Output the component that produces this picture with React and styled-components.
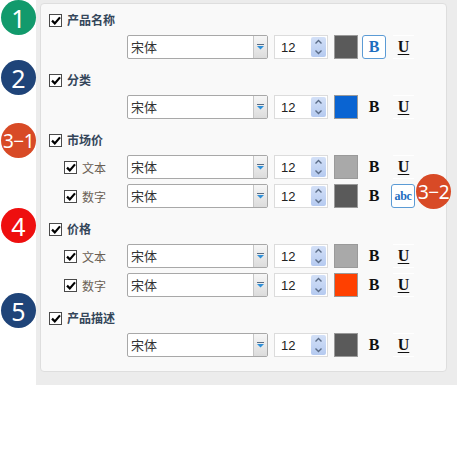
import React from "react";
import styled, { createGlobalStyle, css } from "styled-components";

const Global = createGlobalStyle`
  html, body { margin: 0; padding: 0; background: #fff; }
  body { font-family: "Noto Sans CJK SC", "Noto Sans", sans-serif; }
`;

const Page = styled.div`
  position: relative;
  width: 457px;
  height: 455px;
  padding-left: 36px;
  box-sizing: border-box;
  background: #fff;
`;

const Frame = styled.div`
  background: #ececec;
  height: 385px;
  padding: 3px 10px 13px 4px;
  box-sizing: border-box;
`;

const Panel = styled.div`
  background: #f9f9f9;
  border: 1px solid #dedede;
  border-radius: 4px;
  height: 100%;
  box-sizing: border-box;
  padding: 6px 0 0 8px;
  display: flex;
  flex-direction: column;
  gap: 11px;
`;

const Section = styled.div`
  display: flex;
  flex-direction: column;
  gap: 5px;
`;

const Header = styled.div`
  display: flex;
  align-items: center;
  gap: 5px;
  height: 20px;
`;

const Title = styled.span`
  font-size: 12px;
  font-weight: 700;
  color: #34465a;
  line-height: 20px;
`;

const Row = styled.div`
  display: flex;
  align-items: center;
  height: 24px;
  padding-left: ${(p) => (p.$sub ? "15px" : "78px")};
`;

const LabelCell = styled.div`
  display: flex;
  align-items: center;
  gap: 5px;
  width: 63px;
`;

const SubLabel = styled.span`
  font-size: 12px;
  color: #6a5f55;
`;

const Box = styled.span`
  width: 13px;
  height: 13px;
  box-sizing: border-box;
  border: 1px solid #4a4a4a;
  background: #fff;
  display: inline-flex;
  align-items: center;
  justify-content: center;
  flex: none;
`;

const SelectBox = styled.div`
  width: 141px;
  height: 24px;
  box-sizing: border-box;
  border: 1px solid #a8a8a8;
  border-radius: 2px;
  background: #fff;
  display: flex;
  flex: none;
`;

const SelectText = styled.span`
  flex: 1;
  font-size: 13px;
  color: #333;
  padding-left: 3px;
  line-height: 22px;
`;

const SelectArrow = styled.span`
  width: 13px;
  border-left: 1px solid #c6c6c6;
  background: linear-gradient(#f6f6f6, #dcdcdc);
  display: flex;
  align-items: center;
  justify-content: center;
`;

const NumberBox = styled.div`
  margin-left: 6px;
  width: 54px;
  height: 24px;
  box-sizing: border-box;
  border: 1px solid #dcdcdc;
  background: #fff;
  display: flex;
  align-items: center;
  justify-content: space-between;
  padding: 0 1px 0 6px;
  flex: none;
`;

const NumberText = styled.span`
  font-family: "Liberation Sans", Arial, sans-serif;
  font-size: 13px;
  color: #222;
`;

const Spinner = styled.span`
  width: 15px;
  height: 20px;
  border-radius: 2px;
  background: linear-gradient(#d3e0f7, #b5caf0);
  display: flex;
  flex-direction: column;
  align-items: center;
  justify-content: space-around;
`;

const Swatch = styled.span`
  margin-left: 6px;
  width: 24px;
  height: 24px;
  box-sizing: border-box;
  border: 1px solid #9a9a9a;
  background: ${(p) => p.$color};
  flex: none;
`;

const StyleBtn = styled.span`
  width: 24px;
  height: 24px;
  box-sizing: border-box;
  display: flex;
  align-items: center;
  justify-content: center;
  font-family: "Liberation Serif", "Times New Roman", serif;
  font-weight: 700;
  font-size: 16px;
  color: #111;
  flex: none;
  border: 1px solid transparent;
  border-radius: 3px;
  ${(p) =>
    p.$active &&
    css`
      border-color: #5b9bd5;
      background: #fff;
      color: #1d6dbf;
    `}
`;

const BoldBtn = styled(StyleBtn)`
  margin-left: 4px;
`;

const UBtn = styled(StyleBtn)`
  margin-left: 7px;
  width: 21px;
  border: none;
  border-top: 1px solid #fff;
  border-bottom: 1px solid #fff;
  border-radius: 0;
  text-decoration: underline;
  text-underline-offset: 2px;
`;

const AbcBtn = styled(StyleBtn)`
  margin-left: 5px;
  font-size: 12px;
  letter-spacing: -0.3px;
`;

const Badge = styled.div`
  position: absolute;
  left: ${(p) => p.$x}px;
  top: ${(p) => p.$y}px;
  width: 35px;
  height: 35px;
  border-radius: 50%;
  background: ${(p) => p.$bg};
  color: #fff;
  display: flex;
  align-items: center;
  justify-content: center;
  font-family: "Noto Sans", "Liberation Sans", sans-serif;
  font-size: ${(p) => (p.$small ? "19px" : "25px")};
  letter-spacing: ${(p) => (p.$small ? "-0.5px" : "0")};
`;

const Check = () => (
  <Box>
    <svg width="10" height="9" viewBox="0 0 10 9">
      <path d="M1 4.6 L3.8 7.4 L9 1.4" fill="none" stroke="#000" strokeWidth="2.2" />
    </svg>
  </Box>
);

const Arrow = () => (
  <svg width="7" height="6" viewBox="0 0 7 6">
    <rect x="0" y="0" width="7" height="1" fill="#5a6d84" />
    <path d="M0 2 L7 2 L3.5 5.5 Z" fill="#2f8fd8" />
  </svg>
);

const SpinArrow = ({ up }) => (
  <svg width="9" height="6" viewBox="0 0 9 6">
    <path
      d={up ? "M1.5 4.5 L4.5 1.5 L7.5 4.5" : "M1.5 1.5 L4.5 4.5 L7.5 1.5"}
      fill="none"
      stroke="#5b6d88"
      strokeWidth="1.4"
    />
  </svg>
);

const Controls = ({ color, bold, abc }) => (
  <>
    <SelectBox>
      <SelectText>宋体</SelectText>
      <SelectArrow>
        <Arrow />
      </SelectArrow>
    </SelectBox>
    <NumberBox>
      <NumberText>12</NumberText>
      <Spinner>
        <SpinArrow up />
        <SpinArrow />
      </Spinner>
    </NumberBox>
    <Swatch $color={color} />
    <BoldBtn $active={bold}>B</BoldBtn>
    {abc ? <AbcBtn $active>abc</AbcBtn> : <UBtn>U</UBtn>}
  </>
);

const sections = [
  { title: "产品名称", rows: [{ color: "#5a5a5a", bold: true }] },
  { title: "分类", rows: [{ color: "#0a64d2" }] },
  {
    title: "市场价",
    rows: [
      { label: "文本", color: "#a9a9a9" },
      { label: "数字", color: "#5a5a5a", abc: true },
    ],
  },
  {
    title: "价格",
    rows: [
      { label: "文本", color: "#a9a9a9" },
      { label: "数字", color: "#ff4000" },
    ],
  },
  { title: "产品描述", rows: [{ color: "#5a5a5a" }] },
];

const badges = [
  { x: 1, y: 0, bg: "#129a6c", text: "1" },
  { x: 1, y: 60, bg: "#1f4479", text: "2" },
  { x: 1, y: 123, bg: "#d84a26", text: "3−1", small: true },
  { x: 1, y: 208, bg: "#ee0f0f", text: "4" },
  { x: 1, y: 293, bg: "#1f4479", text: "5" },
  { x: 416, y: 174, bg: "#d84a26", text: "3−2", small: true },
];

export default function App() {
  return (
    <>
      <Global />
      <Page>
        <Frame>
          <Panel>
            {sections.map((s) => (
              <Section key={s.title}>
                <Header>
                  <Check />
                  <Title>{s.title}</Title>
                </Header>
                {s.rows.map((r, i) =>
                  r.label ? (
                    <Row $sub key={i}>
                      <LabelCell>
                        <Check />
                        <SubLabel>{r.label}</SubLabel>
                      </LabelCell>
                      <Controls {...r} />
                    </Row>
                  ) : (
                    <Row key={i}>
                      <Controls {...r} />
                    </Row>
                  )
                )}
              </Section>
            ))}
          </Panel>
        </Frame>
        {badges.map((b) => (
          <Badge key={b.text} $x={b.x} $y={b.y} $bg={b.bg} $small={b.small}>
            {b.text}
          </Badge>
        ))}
      </Page>
    </>
  );
}
